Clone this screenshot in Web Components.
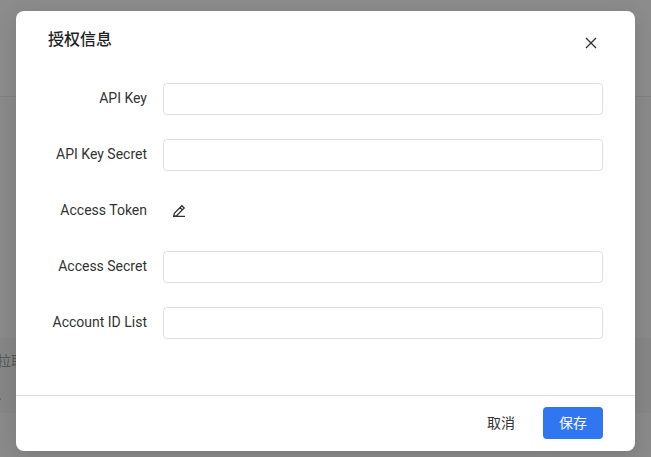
<!DOCTYPE html>
<html lang="zh-CN">
<head>
<meta charset="utf-8">
<title>授权信息</title>
<style>
  body {
    margin: 0;
    overflow: hidden;
    font: 14px/22px Roboto, "Noto Sans CJK SC", sans-serif;
    color: #333;
    -webkit-font-smoothing: antialiased;
  }
</style>
</head>
<body>
<ui-page>
  <ui-dialog heading="授权信息">
    <ui-form-item label="API Key"><ui-input></ui-input></ui-form-item>
    <ui-form-item label="API Key Secret"><ui-input></ui-input></ui-form-item>
    <ui-form-item label="Access Token"><ui-edit></ui-edit></ui-form-item>
    <ui-form-item label="Access Secret"><ui-input></ui-input></ui-form-item>
    <ui-form-item label="Account ID List"><ui-input></ui-input></ui-form-item>
    <ui-button slot="footer">取消</ui-button>
    <ui-button slot="footer" primary>保存</ui-button>
  </ui-dialog>
</ui-page>

<script>
function define(name, html, setup) {
  const template = document.createElement('template');
  template.innerHTML = html;
  customElements.define(name, class extends HTMLElement {
    constructor() {
      super();
      this.attachShadow({ mode: 'open' }).appendChild(template.content.cloneNode(true));
    }
    connectedCallback() {
      if (setup) setup(this, this.shadowRoot);
    }
  });
}

/* ---- ui-page: dimmed page behind the dialog ---- */
define('ui-page', `
  <style>
    :host {
      display: block;
      position: relative;
      height: 457px;
      overflow: hidden;
      background: #8c8c8c;
    }
    .page { display: flex; flex-direction: column; height: 100%; }
    .bar { height: 96px; border-bottom: 1px solid #7f8082; }
    .body { flex: 1; padding-top: 241px; background: #8a8a8b; box-sizing: border-box; }
    .panel {
      height: 75px;
      padding-top: 12px;
      box-sizing: border-box;
      background: #868687;
      color: #565656;
      white-space: nowrap;
    }
    .panel span { display: block; margin-left: -3px; }
    .panel i { display: block; width: 1px; height: 2px; margin-top: 26px; background: #6a6a6a; }
    ::slotted(ui-dialog) { position: absolute; left: 16px; top: 11px; }
  </style>
  <div class="page">
    <div class="bar"></div>
    <div class="body"><div class="panel"><span>拉取</span><i></i></div></div>
  </div>
  <slot></slot>
`);

/* ---- ui-dialog ---- */
define('ui-dialog', `
  <style>
    :host {
      display: flex;
      flex-direction: column;
      width: 619px;
      height: 440px;
      border-radius: 8px;
      background: #fff;
      box-shadow: 0 4px 20px rgba(0, 0, 0, .12);
    }
    header {
      display: flex;
      justify-content: space-between;
      box-sizing: border-box;
      height: 72px;
      padding: 17px 32px 0;
    }
    h2 { margin: 0; font-size: 16px; line-height: 24px; font-weight: 500; color: #1f1f1f; }
    header svg { margin: 9px 6px 0 0; width: 12px; height: 12px; }
    main {
      flex: 1;
      display: flex;
      flex-direction: column;
      gap: 24px;
      padding: 0 32px;
    }
    footer {
      display: flex;
      justify-content: flex-end;
      align-items: flex-start;
      gap: 12px;
      height: 44px;
      padding: 11px 32px 0;
      border-top: 1px solid #dfe0e2;
    }
  </style>
  <header>
    <h2></h2>
    <svg viewBox="0 0 12 12" fill="none" stroke="#333" stroke-width="1.4">
      <path d="M1 1l10 10M11 1L1 11"/>
    </svg>
  </header>
  <main><slot></slot></main>
  <footer><slot name="footer"></slot></footer>
`, (el, root) => {
  root.querySelector('h2').textContent = el.getAttribute('heading');
});

/* ---- ui-form-item ---- */
define('ui-form-item', `
  <style>
    :host { display: flex; align-items: center; height: 32px; }
    label {
      width: 99px;
      margin-right: 16px;
      padding-bottom: 2px;
      text-align: right;
      white-space: nowrap;
    }
    slot { display: block; flex: 1; }
  </style>
  <label></label>
  <slot></slot>
`, (el, root) => {
  root.querySelector('label').textContent = el.getAttribute('label');
});

/* ---- ui-input ---- */
define('ui-input', `
  <style>
    :host { display: block; }
    input {
      display: block;
      width: 100%;
      height: 32px;
      box-sizing: border-box;
      padding: 0 12px;
      border: 1px solid #dfe0e2;
      border-radius: 4px;
      background: #fff;
      font: inherit;
      outline: none;
    }
  </style>
  <input type="text">
`);

/* ---- ui-edit: pencil icon ---- */
define('ui-edit', `
  <style>
    :host { display: flex; padding-left: 9px; }
    svg { width: 14px; height: 14px; }
  </style>
  <svg viewBox="0 0 14 14" fill="none" stroke="#333" stroke-width="1.3">
    <path d="M1.7 12.3l.6-3L9.9 1.7l2.3 2.3-7.6 7.6zM8 3.6l2.3 2.3M1 12.4h12"/>
  </svg>
`);

/* ---- ui-button ---- */
define('ui-button', `
  <style>
    :host { display: block; }
    button {
      display: block;
      height: 32px;
      padding: 0 16px;
      border: 0;
      border-radius: 4px;
      background: transparent;
      color: #333;
      font: inherit;
    }
    :host([primary]) button { background: #2f76f0; color: #fff; }
  </style>
  <button><slot></slot></button>
`);
</script>
</body>
</html>
